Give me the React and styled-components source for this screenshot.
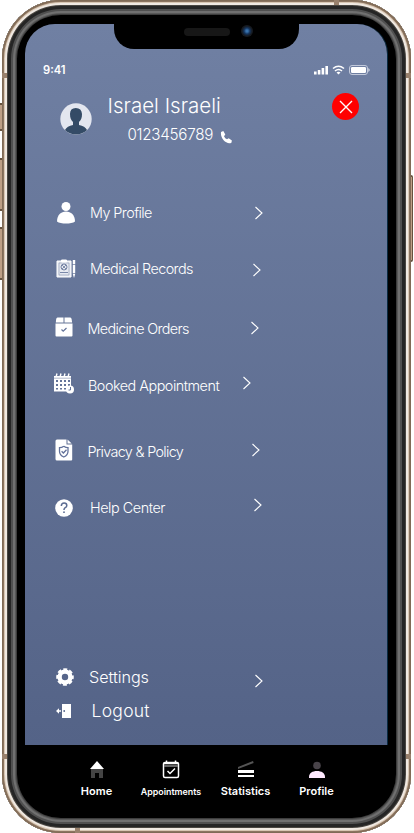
import React from "react";
import styled, { createGlobalStyle } from "styled-components";

const GlobalStyle = createGlobalStyle`
  * { box-sizing: border-box; }
  html, body { margin: 0; background: #fff; overflow: hidden; }
`;

const Stage = styled.main`
  position: relative;
  width: 414px;
  height: 833px;
  padding: 0 2px 0 2px;
  font-family: Inter, "Open Sans", sans-serif;
  color: #fff;
  overflow: hidden;
`;
const SideButton = styled.span`
  position: absolute;
  top: ${(p) => p.$top}px;
  height: ${(p) => p.$height}px;
  ${(p) => (p.$right ? "right: 1px;" : "left: 0;")}
  width: 5px;
  border: 1px solid #66533f;
  border-width: 2px 1px;
  ${(p) => (p.$right ? "" : "border-left: 0;")}
  background: #bd9f86;
  border-radius: ${(p) => (p.$right ? "0 2px 2px 0" : "0")};
`;
const Phone = styled.div`
  position: relative;
  width: 409px;
  height: 833px;
  border-radius: 59px;
  background: #000;
  padding: 24px 22px 16px 23px;
  box-shadow: inset 0 0 0 1px #806b56, inset 0 0 0 2px #8c7561,
    inset 0 0 0 3px #d9c7b3, inset 0 0 0 5px #f0e9e2,
    inset 0 0 0 6px #494641, inset 0 0 0 9px #252525,
    inset 0 0 0 11px #505050, inset 0 0 0 13px #707070,
    inset 0 0 0 14px #585858, inset 0 0 0 15px #3d3d3d;
`;
const Antenna = styled.i`
  position: absolute;
  left: ${(p) => p.$x}px;
  top: ${(p) => p.$y}px;
  width: 5px;
  height: 5px;
  background: #99816d;
`;
const Screen = styled.section`
  width: 362px;
  height: 721px;
  border-radius: 30px 30px 0 0;
  overflow: hidden;
  background: linear-gradient(#7080a3, #546387);
  box-shadow: 1px 0 #092b42;
`;
const Notch = styled.div`
  height: 25px;
  width: 185px;
  margin-left: 89px;
  background: #000;
  border-radius: 0 0 20px 20px;
  display: flex;
  padding: 4px 46px 0 70px;
  justify-content: space-between;
`;
const Speaker = styled.span`
  width: 46px;
  height: 8px;
  border-radius: 5px;
  background: #171717;
`;
const Camera = styled.span`
  width: 12px;
  height: 12px;
  margin-top: -3px;
  border-radius: 50%;
  background: radial-gradient(circle, #3973ad 0 1px, #14335c 3px, #161a20 5px);
`;
const Status = styled.div`
  height: 20px;
  margin-top: 11px;
  padding: 0 17px 0 18px;
  display: flex;
  justify-content: space-between;
  align-items: center;
  font-size: 11.2px;
  font-weight: 600;
  line-height: 20px;
`;
const Profile = styled.header`
  height: 68px;
  display: grid;
  grid-template-columns: 32px 1fr 27px;
  padding: 11px 28px 0 34.5px;
`;
const Avatar = styled.svg`
  width: 32px;
  height: 32px;
  margin-top: 12px;
`;
const Person = styled.div`
  padding-left: 16px;
`;
const Name = styled.h1`
  margin: 3px 0 0;
  font-size: 20.5px;
  line-height: 24px;
  font-weight: 350;
  letter-spacing: 0.02px;
  white-space: nowrap;
`;
const Phoneline = styled.div`
  display: flex;
  align-items: center;
  gap: 6px;
  height: 20px;
  margin: 7px 0 0 20px;
  font-size: 15.2px;
  line-height: 20px;
  font-weight: 300;
  letter-spacing: -0.27px;
  svg { margin-top: 3px; }
`;
const Close = styled.button`
  width: 27px;
  height: 27px;
  margin-top: 2px;
  padding: 0;
  border: 0;
  border-radius: 50%;
  background: #f00;
  display: grid;
  place-items: center;
`;
const Menu = styled.nav`
  padding-top: ${(p) => p.$top || 0}px;
`;
const Row = styled.a`
  display: flex;
  align-items: center;
  height: ${(p) => p.$height}px;
  color: #fff;
`;
const IconSlot = styled.span`
  width: 22px;
  height: 24px;
  margin-left: ${(p) => p.$x}px;
  margin-top: ${(p) => p.$y || 0}px;
  flex: none;
  display: grid;
  place-items: center;
  svg { display: block; }
`;
const Label = styled.span`
  width: ${(p) => p.$width}px;
  flex: none;
  margin-left: ${(p) => p.$gap}px;
  font-size: ${(p) => p.$size || 14.4}px;
  font-weight: 300;
  letter-spacing: ${(p) => p.$spacing || 0}px;
  line-height: 24px;
  white-space: nowrap;
`;
const Chevron = styled.svg`
  width: 10px;
  height: 14px;
  flex: none;
  margin-top: ${(p) => p.$y || 0}px;
  fill: none;
  stroke: #fff;
  stroke-width: 1.1;
`;
const Bottom = styled.nav`
  display: grid;
  grid-template-columns: 72px 77px 72px 70px;
  padding: 13px 0 0 35.5px;
`;
const Tab = styled.a`
  display: flex;
  flex-direction: column;
  align-items: center;
  height: 45px;
  color: #fff;
  font-size: ${(p) => p.$size || 10.8}px;
  line-height: 15px;
  font-weight: 600;
  white-space: nowrap;
  svg { width: 24px; height: 24px; margin-bottom: 2px; flex: none; }
`;

const icons = {
  user: <svg width="20" height="24" viewBox="0 0 20 24" fill="#fff"><circle cx="10" cy="5.5" r="4.5"/><path d="M1 20.5C1 14 5 10.5 10 10.5s9 3.5 9 10c-3.5 2.7-14.5 2.7-18 0Z"/></svg>,
  records: <svg width="20" height="20" viewBox="0 0 20 20" fill="none" stroke="#fff"><path fill="#e7eaf1" d="M1 2h14v16H1z"/><path stroke="#929db7" strokeWidth=".7" d="M3 4h10v12H3z"/><path fill="#fff" d="M5.5 1h5v2h-5z"/><circle cx="8" cy="8" r="3" stroke="#66769b" strokeWidth=".9"/><path stroke="#66769b" strokeWidth=".8" d="m6 6 4 4m0-4-4 4"/><path stroke="#7a88a9" d="M4 13.5h8"/><path fill="#fff" stroke="none" d="M16.8 1h2.4v14l-1.2 4-1.2-4z"/><path stroke="#65759a" strokeWidth=".7" d="M16 5.5h4m-4 9h4"/></svg>,
  box: <svg width="18" height="20" viewBox="0 0 18 20" fill="#fff"><path d="M2.5.5h6v5H.8L1.2 2Q1.5.5 2.5.5m7 0h5.8q1 0 1.3 1.5l.5 3.5H9.5zM.5 6.5h17v12q0 1-1 1h-15q-1 0-1-1z"/><path d="m6.5 12.5 1.7 1.7 3.3-3.2" fill="none" stroke="#64749a" strokeWidth="1.2"/></svg>,
  calendar: <svg width="21" height="21" viewBox="0 0 21 21"><path fill="#fff" d="M1 3h17v15.5H1z"/><path stroke="#fff" strokeWidth="1.4" d="m3 4 1-3.5m3 3.5 1-3.5m3 3.5 1-3.5m3 3.5 1-3.5"/><path stroke="#64749a" d="M1 5.2h17" opacity=".5"/><path fill="#64749a" d="M3 7h2v2H3zm4 0h2v2H7zm4 0h2v2h-2zm4 0h2v2h-2zM3 11h2v2H3zm4 0h2v2H7zm4 0h2v2h-2zM3 15h2v1.5H3zm4 0h2v1.5H7zm4 0h2v1.5h-2zm4-4h2v2h-2z"/><circle cx="17" cy="16.5" r="4" fill="#fff"/><path d="M17.5 14v3h-2" fill="none" stroke="#64749a"/></svg>,
  privacy: <svg width="18" height="22" viewBox="0 0 18 22"><path fill="#fff" d="M2 .5h9.5v5h5.7v15q0 1-1 1H2q-1.5 0-1.5-1.5V2Q.5.5 2 .5m10.5 0 4.2 4h-4.2z"/><path d="M8.8 7.2q2 1.5 4.2 1.5v3.5q0 4-4.2 5.8-4.3-1.8-4.3-5.8V8.7q2.3 0 4.3-1.5m-2.2 5 1.8 1.8 3.1-3.2" fill="none" stroke="#62719a" strokeWidth="1.3"/></svg>,
  help: <svg width="18" height="18" viewBox="0 0 18 18"><circle cx="9" cy="9" r="8.8" fill="#fff"/><path d="M6.3 7q.2-3 2.8-3 2.7 0 2.7 2.4 0 1.4-1.6 2.3-1.2.7-1.2 2.3" fill="none" stroke="#5c6c92" strokeWidth="1.5"/><circle cx="9" cy="13.2" r=".9" fill="#5c6c92"/></svg>,
  gear: <svg width="18" height="18" viewBox="0 0 18 18"><circle cx="9" cy="9" r="5.4" fill="none" stroke="#fff" strokeWidth="4.4"/><circle cx="9" cy="9" r="7.7" fill="none" stroke="#fff" strokeWidth="2.2" strokeDasharray="3.9 2.148" strokeDashoffset="1.95"/></svg>,
  logout: <svg width="16" height="16" viewBox="0 0 16 16"><path fill="#fff" d="M6 1h9v14H6zM0 8l3-2.7v2h2v1.5H3v2z"/><circle cx="8.2" cy="8" r=".9" fill="#53648b"/></svg>,
};

const items = [
  { label: "My Profile", icon: "user", height: 57, x: 30, gap: 13, width: 164, spacing: -0.57 },
  { label: "Medical Records", icon: "records", height: 55, x: 30, gap: 13, width: 162, spacing: -0.59, arrowY: 3, iconY: 1 },
  { label: "Medicine Orders", icon: "box", height: 65, x: 27.5, gap: 13, width: 162.5, spacing: -0.65, arrowY: -2, iconY: -3 },
  { label: "Booked Appointment", icon: "calendar", height: 50, x: 27.5, gap: 13.5, width: 153.5, spacing: -0.49, arrowY: -6, iconY: -5 },
  { label: "Privacy & Policy", icon: "privacy", height: 81, x: 27.5, gap: 13, width: 163.5, spacing: -0.67, arrowY: -4, iconY: -4 },
  { label: "Help Center", icon: "help", height: 32, x: 28, gap: 15, width: 162.5, spacing: -0.46, arrowY: -7 },
];
const account = [
  { label: "Settings", icon: "gear", height: 35, x: 29, gap: 13, width: 164.5, size: 16.2, spacing: -0.05, arrowY: 9 },
  { label: "Logout", icon: "logout", height: 34, x: 28, gap: 16.5, width: 150, size: 17.5, spacing: 0.28, noArrow: true },
];
function MenuItem({ item }) {
  return <Row $height={item.height}>
    <IconSlot $x={item.x} $y={item.iconY}>{icons[item.icon]}</IconSlot>
    <Label $gap={item.gap} $width={item.width} $size={item.size} $spacing={item.spacing}>{item.label}</Label>
    {!item.noArrow && <Chevron viewBox="0 0 10 14" $y={item.arrowY}><path d="m1.5 1 6.5 6-6.5 6"/></Chevron>}
  </Row>;
}

export default function App() {
  return <><GlobalStyle /><Stage>
    <SideButton $top={103} $height={28}/><SideButton $top={158} $height={53}/><SideButton $top={227} $height={53}/><SideButton $right $top={175} $height={87}/>
    <Phone>
      <Antenna $x={0} $y={73}/><Antenna $x={404} $y={73}/><Antenna $x={332} $y={0}/><Antenna $x={0} $y={754}/><Antenna $x={404} $y={754}/><Antenna $x={73} $y={828}/>
      <Screen>
        <Notch><Speaker/><Camera/></Notch>
        <Status><span>9:41</span><svg width="57" height="12" viewBox="0 0 57 12" fill="#fff"><path d="M1 7.5h2.6v3H1zM4.8 6h2.6v4.5H4.8zM8.6 4h2.6v6.5H8.6zM12.4 2H15v8.5h-2.6z"/><g fill="none" stroke="#fff" strokeWidth="1.6"><path d="M20 4.5q5.5-4.5 11 0M22 7q3.5-3 7 0"/></g><path d="m23.5 8.5 2 2 2-2q-2-1.5-4 0"/><rect x="36.5" y="1.5" width="18" height="9" rx="2.5" fill="none" stroke="#c2c9db"/><rect x="38" y="3" width="15" height="6" rx="1.2"/><path d="M55.5 4v4q2-2 0-4"/></svg></Status>
        <Profile>
          <Avatar viewBox="0 0 32 32"><circle cx="16" cy="16" r="15.7" fill="#e3e6ef"/><path d="M5 27q2-4 8-5v-3c-2-2-3-4-3-8q0-6 5.8-6t6.2 6c0 4-1 6-3 8v3q6 1 8 5a15.7 15.7 0 0 1-22 0" fill="#344b66"/></Avatar>
          <Person><Name>Israel Israeli</Name><Phoneline><span>0123456789</span><svg width="14" height="14" viewBox="0 0 14 14" fill="#fff"><path d="M2 2 4.3 1l2 3.5L5 6.2Q6 8.5 8 9.3l1.7-1.1 3.2 2.2-.5 2.3C8 15 1 9 2 2"/></svg></Phoneline></Person>
          <Close aria-label="Close"><svg width="14" height="14" viewBox="0 0 14 14"><path d="m1 1 12 12M13 1 1 13" stroke="#fff" strokeWidth="1.4"/></svg></Close>
        </Profile>
        <Menu $top={36}>{items.map((item) => <MenuItem key={item.label} item={item}/>)}</Menu>
        <Menu $top={135}>{account.map((item) => <MenuItem key={item.label} item={item}/>)}</Menu>
      </Screen>
      <Bottom>
        <Tab $size={11}><svg viewBox="0 0 24 24"><path fill="#444" d="M6 11h12v9h-4v-5h-4v5H6z"/><path fill="#fff" d="m12 3 7 8H5z"/></svg>Home</Tab>
        <Tab $size={8.9}><svg viewBox="0 0 24 24" fill="none" stroke="#fff" strokeWidth="1.5"><rect x="4.5" y="4.5" width="15" height="15" rx="1.5"/><path d="M5 5.5h14M7.5 2.5v3m9-3v3"/><path stroke="#888" d="M5 8h14"/><path d="m8.5 13 2.5 2.5 5-5"/></svg>Appointments</Tab>
        <Tab $size={11}><svg viewBox="0 0 24 24"><path fill="#555" d="m4 9 15-6 .6 2L4 11z"/><path fill="#fff" d="M4 12h16v3H4zm0 5h16v2H4z"/></svg>Statistics</Tab>
        <Tab $size={11}><svg viewBox="0 0 24 24"><circle cx="12" cy="7.5" r="3.8" fill="#484349"/><path fill="#ffe9ff" d="M4 20v-1c0-4 3.5-6 8-6s8 2 8 6v1z"/></svg>Profile</Tab>
      </Bottom>
    </Phone>
  </Stage></>;
}
